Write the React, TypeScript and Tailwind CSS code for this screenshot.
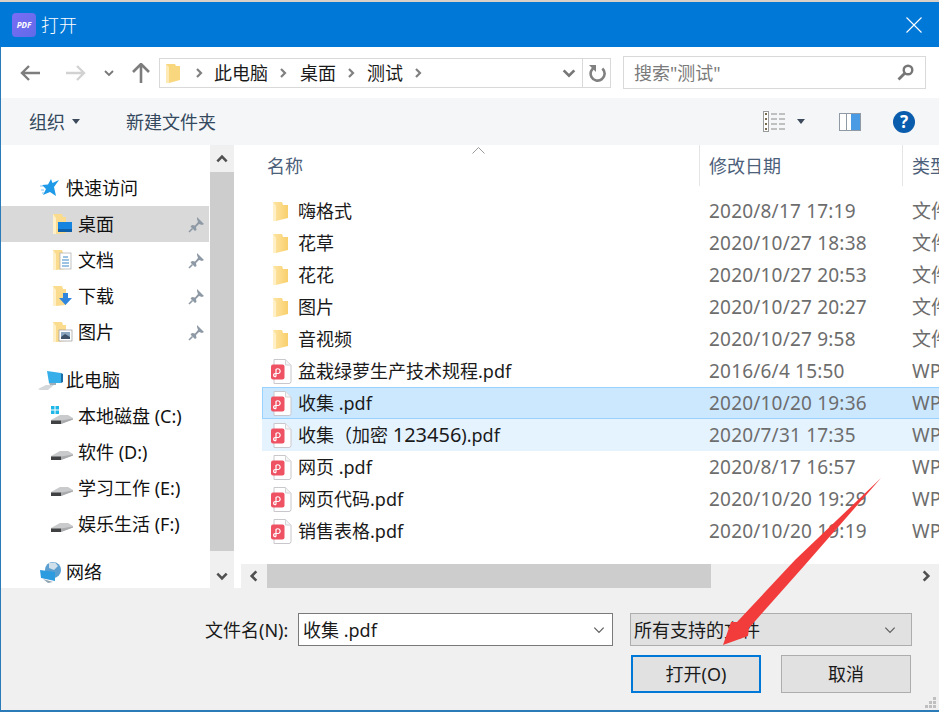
import React from "react";

const Chev = ({ d, size = 12, color = "#808080", w = 2.2, className = "" }: { d: "l" | "r" | "u" | "d"; size?: number; color?: string; w?: number; className?: string }) => {
  const pts = { l: "8,2 4,6 8,10", r: "4,2 8,6 4,10", u: "2,8 6,4 10,8", d: "2,4 6,8 10,4" }[d];
  return (
    <svg width={size} height={size} viewBox="0 0 12 12" className={className}>
      <polyline points={pts} fill="none" stroke={color} strokeWidth={w} />
    </svg>
  );
};

const Caret = () => (
  <svg width="8" height="5" viewBox="0 0 8 5"><path d="M0 0H8L4 5Z" fill="#3c4a5c" /></svg>
);

const Folder = () => (
  <svg width="16" height="21" viewBox="0 0 16 21">
    <defs>
      <linearGradient id="fg" x1="0" y1="0" x2="1" y2="0">
        <stop offset="0" stopColor="#fde5a4" />
        <stop offset="1" stopColor="#f9cf6c" />
      </linearGradient>
    </defs>
    <path d="M0 1H9L10 4H15V17L3 20H0Z" fill="url(#fg)" />
    <path d="M0 1V20H3V5Z" fill="#fff0c8" />
  </svg>
);

const Pdf = () => (
  <svg width="21" height="25" viewBox="0 0 21 25">
    <path d="M3 .5H14.5L20 6V22.5Q20 24.5 18 24.5H3Z" fill="#fff" stroke="#c9c6cc" />
    <path d="M14.5 .5V6H20" fill="#f4f4f4" stroke="#d5d3d7" />
    <rect x="0" y="5.5" width="13.5" height="15" rx="2" fill="#ee5263" />
    <path d="M5 17.5V10.5A2.4 2.4 0 1 1 7.2 14.5H4.2A1.6 1.6 0 1 0 5 17.5" fill="none" stroke="#fff" strokeWidth="1.2" />
  </svg>
);

const Pin = () => (
  <svg width="17" height="17" viewBox="0 0 17 17">
    <path d="M9 1L16 8L14 9L11 8L8 11L8.5 14L7 15L2.5 10.5L4 9L7 9.5L10 6L9 3Z" fill="#8e99a6" />
    <path d="M4.5 12.5L1 16" stroke="#8e99a6" strokeWidth="1.6" />
  </svg>
);

const SideFolder = ({ children }: { children?: React.ReactNode }) => (
  <svg width="21" height="22" viewBox="0 0 21 22">
    <path d="M1 1H10L11 4H14V20L4 21H1Z" fill="#fbdc8e" />
    <path d="M1 1V21H4V5Z" fill="#fff0c8" />
    {children}
  </svg>
);

const Drive = ({ win }: { win?: boolean }) => (
  <svg className="-ml-[2px]" width="24" height="20" viewBox="0 0 24 20">
    {win && (
      <g fill="#1fb6e8">
        <rect x="1" y="0" width="3.5" height="3.5" />
        <rect x="5.5" y="0" width="3.5" height="3.5" />
        <rect x="1" y="4.5" width="3.5" height="3.5" />
        <rect x="5.5" y="4.5" width="3.5" height="3.5" />
      </g>
    )}
    <path d="M1 14L10 9H18L23 12V13.5L11 18H1Z" fill="#c9cacb" />
    <path d="M1 14.5H11V18H1Z" fill="#3f4143" />
    <path d="M11 14.5L23 12.5V13.5L11 18Z" fill="#a9abad" />
  </svg>
);

const Row = ({ kind, name, date, type, cls = "border-transparent" }: { kind: "f" | "p"; name: React.ReactNode; date: string; type: string; cls?: string }) => (
  <div className={`flex items-center h-8 border ${cls}`}>
    <div className="w-[5px] shrink-0" />
    <div className="w-[26px] shrink-0 flex justify-center">{kind === "f" ? <Folder /> : <Pdf />}</div>
    <div className="w-[4px] shrink-0" />
    <div className="w-[411px] shrink-0 text-[#1a1a1a] whitespace-nowrap">{name}</div>
    <div className="w-[203px] shrink-0 text-[#6d6d6d] text-[19px] tracking-[0.2px] whitespace-nowrap">{date}</div>
    <div className="text-[#6d6d6d] whitespace-nowrap text-[19px]">{type}</div>
  </div>
);

const Side = ({ icon, label, pin, top, active, indent }: { icon: React.ReactNode; label: string; pin?: boolean; top?: number; active?: boolean; indent?: boolean }) => (
  <div className={`flex items-center h-9 shrink-0 ${active ? "bg-[#d9d9d9]" : ""} ${indent ? "pl-[51px]" : "pl-[36px]"} ${top === 12 ? "mt-3" : ""}`}>
    <div className={`${indent ? "w-[26px]" : "w-[29px]"} shrink-0 flex`}>{icon}</div>
    <div className="flex-1 text-[#111] whitespace-nowrap">{label}</div>
    {pin && <div className="pr-[4px] flex"><Pin /></div>}
  </div>
);

const rows: [("f" | "p"), React.ReactNode, string, string][] = [
  ["f", "嗨格式", "2020/8/17 17:19", "文件"],
  ["f", "花草", "2020/10/27 18:38", "文件"],
  ["f", "花花", "2020/10/27 20:53", "文件"],
  ["f", "图片", "2020/10/27 20:27", "文件"],
  ["f", "音视频", "2020/10/27 9:58", "文件"],
  ["p", "盆栽绿萝生产技术规程.pdf", "2016/6/4 15:50", "WP"],
  ["p", "收集 .pdf", "2020/10/20 19:36", "WP"],
  ["p", <>收集（加密 <span className="text-[20px]">123456</span>).pdf</>, "2020/7/31 17:35", "WP"],
  ["p", "网页 .pdf", "2020/8/17 16:57", "WP"],
  ["p", "网页代码.pdf", "2020/10/20 19:29", "WP"],
  ["p", "销售表格.pdf", "2020/10/20 19:19", "WP"],
];

export default function App() {
  return (
    <div className="relative w-[939px] h-[712px] overflow-hidden flex flex-col bg-white text-[18px] leading-none font-['Noto_Sans','Noto_Sans_CJK_SC',sans-serif]">
      <div className="h-[2px] bg-[#d9d0c8] shrink-0" />
      {/* title */}
      <div className="h-[45px] shrink-0 bg-[#0078d7] flex items-center pl-3 pr-[17px] text-white">
        <div className="w-6 h-6 rounded-[4px] bg-gradient-to-br from-[#7a6cf5] to-[#5f6be8] flex items-center justify-center text-[8px] font-bold italic text-white shrink-0">PDF</div>
        <div className="ml-[5px] flex-1 font-light">打开</div>
        <svg width="16" height="16" viewBox="0 0 16 16"><path d="M.5 .5L15.5 15.5M15.5 .5L.5 15.5" stroke="#fff" strokeWidth="1.1" /></svg>
      </div>
      <div className="flex-1 min-h-0 flex flex-col border-l border-[#2b7bb9]">
        {/* nav */}
        <div className="h-[51px] shrink-0 flex items-center">
          <svg className="ml-[19px]" width="20" height="16" viewBox="0 0 20 16"><path d="M9 1L2 8L9 15M2 8H20" fill="none" stroke="#7d7d7d" strokeWidth="2.4" /></svg>
          <svg className="ml-[26px]" width="20" height="16" viewBox="0 0 20 16"><path d="M11 1L18 8L11 15M18 8H0" fill="none" stroke="#d2d2d2" strokeWidth="2.4" /></svg>
          <Chev d="d" size={12} className="ml-[17px]" color="#777" w={1.8} />
          <svg className="ml-[17px]" width="18" height="20" viewBox="0 0 18 20"><path d="M1 9L9 1L17 9M9 1V20" fill="none" stroke="#7d7d7d" strokeWidth="2.6" /></svg>
          <div className="ml-[9px] w-[452px] h-[30px] border border-[#d9d9d9] flex items-center shrink-0 text-[#1a1a1a]">
            <svg className="ml-[6px]" width="15" height="20" viewBox="0 0 15 20"><path d="M0 1H9L10 3H14V17L3 20H0Z" fill="#f9d77e" /><path d="M0 1V20H3V4Z" fill="#fdeab5" /></svg>
            <Chev d="r" size={12} className="ml-[12px]" />
            <span className="ml-[9px]">此电脑</span>
            <Chev d="r" size={12} className="ml-[9px]" />
            <span className="ml-[11px]">桌面</span>
            <Chev d="r" size={12} className="ml-[9px]" />
            <span className="ml-[10px]">测试</span>
            <Chev d="r" size={12} className="ml-[9px]" />
            <div className="flex-1" />
            <Chev d="d" size={16} className="mr-[5px]" color="#777" w={2} />
            <div className="w-[28px] h-full border-l border-[#d9d9d9] flex items-center justify-center">
              <svg width="18" height="18" viewBox="0 0 18 18"><path d="M6 3.5A7 7 0 1 0 13 3.2" fill="none" stroke="#808080" strokeWidth="2.6" transform="rotate(15 9 9)" /><path d="M1 1H8V8Z" fill="#808080" /></svg>
            </div>
          </div>
          <div className="ml-[12px] w-[303px] h-[33px] border border-[#d9d9d9] flex items-center shrink-0 pl-[10px] pr-[11px]">
            <span className="flex-1 text-[#7a7a7a]">搜索"测试"</span>
            <svg width="17" height="17" viewBox="0 0 17 17"><circle cx="11" cy="6" r="4.3" fill="none" stroke="#777" strokeWidth="2.4" /><path d="M8 9L1.5 15.5" stroke="#777" strokeWidth="2.8" /></svg>
          </div>
        </div>
        {/* toolbar */}
        <div className="h-[47px] shrink-0 bg-[#f5f6f7] flex items-center text-[#34495e]">
          <span className="ml-[28px]">组织</span>
          <span className="ml-[7px] flex"><Caret /></span>
          <span className="ml-[46px]">新建文件夹</span>
          <div className="flex-1" />
          <svg width="22" height="21" viewBox="0 0 22 21">
            <rect x=".5" y=".5" width="5" height="20" fill="#fff" stroke="#9a9a9a" />
            <path d="M2 3H4M2 8H4M2 13H4M2 18H4" stroke="#7a6a50" strokeWidth="2" />
            <path d="M8 3H14M16 3H22M8 8H14M16 8H22M8 13H14M16 13H22M8 18H14M16 18H22" stroke="#8a8a8a" />
          </svg>
          <span className="ml-[12px] flex"><Caret /></span>
          <svg className="ml-[34px]" width="22" height="18" viewBox="0 0 22 18">
            <rect x=".5" y=".5" width="21" height="17" fill="#fff" stroke="#8f9aa5" />
            <rect x="7" y="1" width="1" height="16" fill="#8f9aa5" />
            <rect x="12" y="1" width="9" height="16" fill="#4a9ae4" />
          </svg>
          <div className="ml-[32px] mr-[24px] w-[22px] h-[22px] rounded-full bg-[#0a5cad] text-white text-[17px] font-bold flex items-center justify-center shrink-0">?</div>
        </div>
        {/* body */}
        <div className="h-[443px] shrink-0 flex overflow-hidden">
          <div className="w-[208px] shrink-0 pt-[25px] flex flex-col overflow-hidden">
            <Side label="快速访问" icon={<svg className="ml-[3px]" width="20" height="20" viewBox="0 0 20 20"><path d="M19 2L14 9L16 18L10 14L3 17L6 11L2 7L8 6.5L11 1L12.5 5Z" fill="#1e9ae8" /><path d="M0 8H3M1 12H4M2 15H4" stroke="#7cc4f2" /></svg>} />
            <Side indent active pin label="桌面" icon={<SideFolder><rect x="6" y="9" width="14" height="10" fill="#1583e0" /><rect x="6" y="16" width="14" height="3" fill="#0f5fa8" /></SideFolder>} />
            <Side indent pin label="文档" icon={<SideFolder><rect x="8" y="4" width="11" height="16" fill="#fff" stroke="#aaa" strokeWidth=".7" /><path d="M11 8H16M10 11H17M10 14H17M10 17H17" stroke="#3b87c8" /></SideFolder>} />
            <Side indent pin label="下载" icon={<SideFolder><path d="M11 8H16V13H20L13.5 20L7 13H11Z" fill="#2f86dc" /></SideFolder>} />
            <Side indent pin label="图片" icon={<SideFolder><rect x="7" y="9" width="13" height="11" fill="#fff" stroke="#999" strokeWidth=".7" /><rect x="9" y="11" width="9" height="5" fill="#8ba7bf" /><path d="M9 16L13 13L18 16V18H9Z" fill="#3d5266" /></SideFolder>} />
            <Side top={12} label="此电脑" icon={
              <svg width="26" height="22" viewBox="0 0 26 22">
                <path d="M10 2L24 4V14L12 14Z" fill="#35aeea" />
                <path d="M24 4L26 5V13L24 14Z" fill="#1c6fa5" />
                <path d="M12 14L19 14V16L13 16Z" fill="#9fb0bb" />
                <path d="M1 20L9 16H17L11 21H3Z" fill="#d5d8da" />
              </svg>} />
            <Side indent label="本地磁盘 (C:)" icon={<Drive win />} />
            <Side indent label="软件 (D:)" icon={<Drive />} />
            <Side indent label="学习工作 (E:)" icon={<Drive />} />
            <Side indent label="娱乐生活 (F:)" icon={<Drive />} />
            <Side top={12} label="网络" icon={
              <svg className="ml-[2px]" width="23" height="22" viewBox="0 0 23 22">
                <circle cx="14" cy="9" r="8" fill="#5a9fcf" />
                <path d="M10 2L16 1.5L19 5L15 9L10 7Z" fill="#cfe0ea" />
                <path d="M1 9L16 11V20L2 17Z" fill="#2d9be0" />
                <path d="M4 18L14 21L9 22Z" fill="#8fa3b2" />
              </svg>} />
          </div>
          <div className="w-px shrink-0" />
          <div className="w-6 shrink-0 flex flex-col bg-[#f0f0f0]">
            <div className="h-[27px] shrink-0 flex items-center justify-center"><Chev d="u" size={14} color="#505050" /></div>
            <div className="h-[379px] shrink-0 bg-[#cdcdcd]" />
            <div className="flex-1 flex items-center justify-center pt-[12px]"><Chev d="d" size={14} color="#505050" /></div>
          </div>
          <div className="w-[7px] shrink-0" />
          <div className="flex-1 min-w-0 flex flex-col overflow-hidden">
            {/* header */}
            <div className="h-[41px] shrink-0 relative flex items-center text-[#4c607a]">
              <div className="w-[459px] h-full shrink-0 border-r border-[#e5e5e5] flex items-center pl-[26px]">名称</div>
              <div className="w-[203px] h-full shrink-0 border-r border-[#e5e5e5] flex items-center pl-[9px]">修改日期</div>
              <div className="pl-[9px] whitespace-nowrap">类型</div>
              <svg className="absolute left-[231px] top-[2px]" width="13" height="7" viewBox="0 0 13 7"><path d="M.5 6.5L6.5 .5L12.5 6.5" fill="none" stroke="#9a9a9a" /></svg>
            </div>
            <div className="flex-1 min-h-0 pt-[9px] pl-[21px] overflow-hidden">
              <div className="w-[720px]">
                {rows.map((r, i) => (
                  <Row key={i} kind={r[0]} name={r[1]} date={r[2]} type={r[3]} cls={i === 6 ? "bg-[#cce8ff] border-[#99d1ff]" : i === 7 ? "bg-[#e5f3ff] border-[#e5f3ff]" : "border-transparent"} />
                ))}
              </div>
            </div>
            <div className="h-6 shrink-0 bg-[#f0f0f0] flex items-center">
              <div className="w-[26px] flex justify-center"><Chev d="l" size={14} color="#505050" /></div>
              <div className="w-[444px] h-full bg-[#cdcdcd]" />
              <div className="flex-1" />
              <div className="w-[27px] flex justify-center"><Chev d="r" size={14} color="#505050" /></div>
            </div>
          </div>
        </div>
        {/* footer */}
        <div className="flex-1 bg-[#f0f0f0] relative text-[#1a1a1a] pt-[25px] pl-[204px]">
          <div className="flex items-center h-[33px]">
            <span className="w-[93px] shrink-0 whitespace-nowrap">文件名(N):</span>
            <div className="w-[315px] h-[33px] bg-white border border-[#7a7a7a] flex items-center pl-[4px] pr-[6px] shrink-0">
              <span className="flex-1">收集 .pdf</span>
              <Chev d="d" size={14} color="#606060" w={1.1} />
            </div>
            <div className="ml-[17px] w-[282px] h-[33px] bg-[#e1e1e1] border border-[#adadad] flex items-center pl-[3px] pr-[14px] shrink-0">
              <span className="flex-1">所有支持的文件</span>
              <Chev d="d" size={14} color="#606060" w={1.1} />
            </div>
          </div>
          <div className="flex mt-[9px] ml-[426px]">
            <div className="w-[130px] h-[38px] bg-[#e1e1e1] border-2 border-[#0078d7] flex items-center justify-center">打开(O)</div>
            <div className="ml-[20px] w-[130px] h-[38px] bg-[#e1e1e1] border border-[#adadad] flex items-center justify-center">取消</div>
          </div>
          <svg className="absolute right-[3px] bottom-[2px]" width="11" height="11" viewBox="0 0 11 11"><path d="M8 0h3v3H8zM4 4h3v3H4zM8 4h3v3H8zM0 8h3v3H0zM4 8h3v3H4zM8 8h3v3H8z" fill="#bfbfbf" /></svg>
        </div>
        <div className="h-[2px] shrink-0 bg-[#2b7bb9] -ml-px" />
      </div>
      {/* annotation arrow */}
      <svg className="absolute left-[710px] top-[470px] pointer-events-none" width="180" height="185" viewBox="710 470 180 185">
        <path d="M881 478L804 566L749 628L748 636L723 645L731 622L737 622L795 560Z" fill="#f23b3b" />
      </svg>
    </div>
  );
}
